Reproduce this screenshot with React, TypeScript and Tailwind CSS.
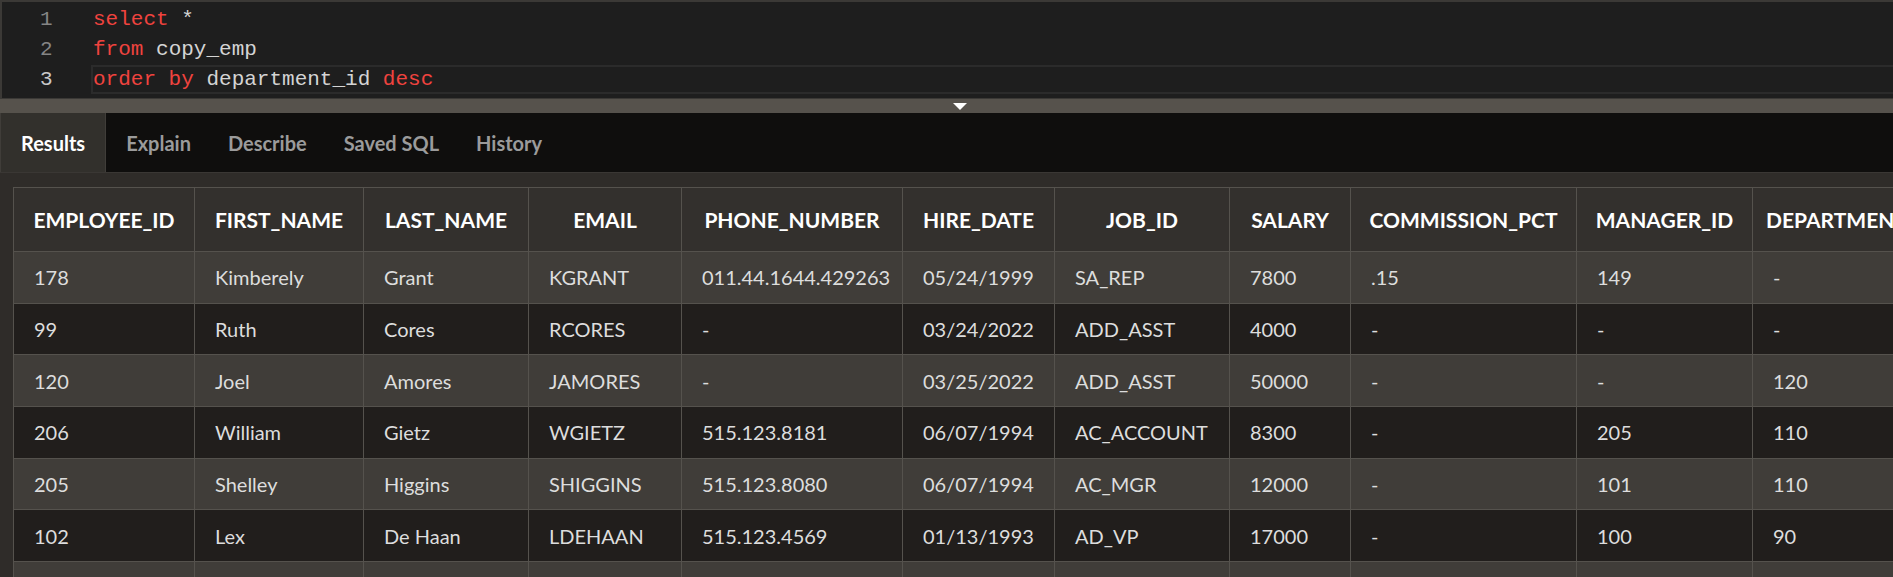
import React from "react";

const cols = [
  { name: "EMPLOYEE_ID", w: 181 },
  { name: "FIRST_NAME", w: 169 },
  { name: "LAST_NAME", w: 165 },
  { name: "EMAIL", w: 153 },
  { name: "PHONE_NUMBER", w: 221 },
  { name: "HIRE_DATE", w: 152 },
  { name: "JOB_ID", w: 175 },
  { name: "SALARY", w: 121 },
  { name: "COMMISSION_PCT", w: 226 },
  { name: "MANAGER_ID", w: 176 },
  { name: "DEPARTMENT_ID", w: 200 },
];

const rows: string[][] = [
  ["178", "Kimberely", "Grant", "KGRANT", "011.44.1644.429263", "05/24/1999", "SA_REP", "7800", ".15", "149", "-"],
  ["99", "Ruth", "Cores", "RCORES", "-", "03/24/2022", "ADD_ASST", "4000", "-", "-", "-"],
  ["120", "Joel", "Amores", "JAMORES", "-", "03/25/2022", "ADD_ASST", "50000", "-", "-", "120"],
  ["206", "William", "Gietz", "WGIETZ", "515.123.8181", "06/07/1994", "AC_ACCOUNT", "8300", "-", "205", "110"],
  ["205", "Shelley", "Higgins", "SHIGGINS", "515.123.8080", "06/07/1994", "AC_MGR", "12000", "-", "101", "110"],
  ["102", "Lex", "De Haan", "LDEHAAN", "515.123.4569", "01/13/1993", "AD_VP", "17000", "-", "100", "90"],
  ["", "", "", "", "", "", "", "", "", "", ""],
];

const gridCols =
  "grid-cols-[181px_169px_165px_153px_221px_152px_175px_121px_226px_176px_200px]";

export default function App() {
  return (
    <div className="w-[1893px] h-[577px] overflow-hidden bg-[#2f2c29] flex flex-col font-['Lato',sans-serif]">
      {/* SQL editor */}
      <div className="h-[99px] shrink-0 bg-[#1e1e1e] border-t-2 border-l-2 border-b border-[#3b3936] flex font-['Liberation_Mono',monospace] text-[21px]">
        <div className="w-[89px] shrink-0 pt-[3px] flex flex-col">
          <div className="h-[30px] leading-[30px] pl-[38px] text-[#858585]">1</div>
          <div className="h-[30px] leading-[30px] pl-[38px] text-[#858585]">2</div>
          <div className="h-[30px] leading-[30px] pl-[38px] text-[#c8c8c8]">3</div>
        </div>
        <div className="flex-1 pt-[3px] flex flex-col">
          <div className="h-[30px] leading-[30px] pl-[2px] whitespace-pre">
            <span className="text-[#f0433e]">select</span>
            <span className="text-[#d4d4d4]"> *</span>
          </div>
          <div className="h-[30px] leading-[30px] pl-[2px] whitespace-pre">
            <span className="text-[#f0433e]">from</span>
            <span className="text-[#d4d4d4]"> copy_emp</span>
          </div>
          <div className="h-[29px] leading-[26px] border-2 border-r-0 border-[#2b2b2b] whitespace-pre">
            <span className="text-[#f0433e]">order by</span>
            <span className="text-[#d4d4d4]"> department_id </span>
            <span className="text-[#f0433e]">desc</span>
          </div>
        </div>
      </div>

      {/* splitter */}
      <div className="h-[14px] shrink-0 bg-[#56524c] flex items-center justify-center pl-[27px]">
        <div className="w-0 h-0 border-l-[7px] border-r-[7px] border-t-[7px] border-l-transparent border-r-transparent border-t-white" />
      </div>

      {/* tabs */}
      <div className="h-[60px] shrink-0 bg-[#0f0e0d] border-b border-[#3a3734] flex text-[20px] font-bold">
        <div className="px-[20px] flex items-center bg-[#32302c] border-l border-r border-[#403d39] text-white">
          Results
        </div>
        <div className="pl-[20px] pr-[18px] flex items-center text-[#9b9b9b]">Explain</div>
        <div className="pl-[19px] pr-[18px] flex items-center text-[#9b9b9b]">Describe</div>
        <div className="pl-[19px] pr-[18px] flex items-center text-[#9b9b9b]">Saved SQL</div>
        <div className="px-[19px] flex items-center text-[#9b9b9b]">History</div>
      </div>

      {/* results grid */}
      <div className="flex-1 pt-[14px] pl-[13px] overflow-hidden">
        <div className={`grid ${gridCols} w-max border-t border-l border-[#55524d]`}>
          {cols.map((c) => (
            <div
              key={c.name}
              className="h-[64px] bg-[#33302d] border-r border-b border-[#55524d] flex items-center justify-center text-[21px] font-bold text-white whitespace-nowrap overflow-hidden"
            >
              {c.name}
            </div>
          ))}
          {rows.map((r, i) =>
            r.map((v, j) => (
              <div
                key={`${i}-${j}`}
                className={`h-[51.67px] border-r border-b border-[#55524d] flex items-center pl-[20px] text-[20px] text-[#dddddd] whitespace-nowrap ${
                  i % 2 === 0 ? "bg-[#403d39]" : "bg-[#211e1c]"
                }`}
              >
                {v}
              </div>
            ))
          )}
        </div>
      </div>
    </div>
  );
}
